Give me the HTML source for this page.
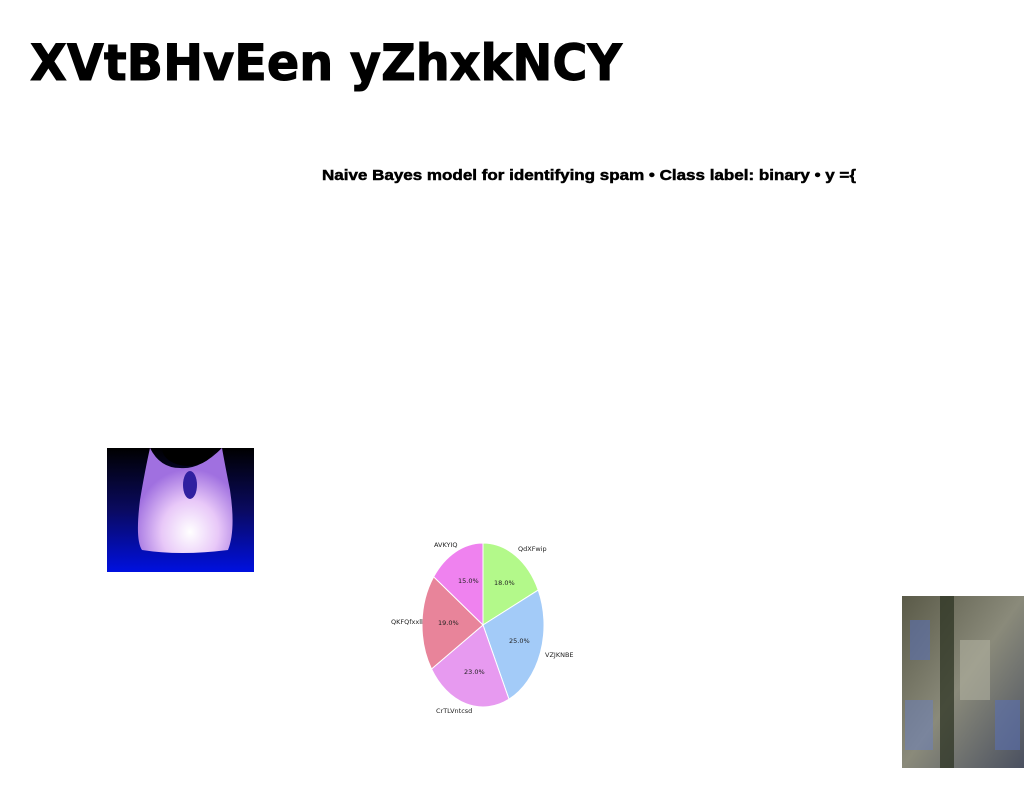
<!DOCTYPE html>
<html><head><meta charset="utf-8"><style>
html,body{margin:0;padding:0;background:#fff;width:1024px;height:788px;overflow:hidden;position:relative}
svg{position:absolute;left:0;top:0}
</style></head><body>
<svg width="1024" height="788" viewBox="0 0 1024 788">
<defs>
<radialGradient id="glow" cx="0.55" cy="0.8" r="0.6">
<stop offset="0" stop-color="#ffffff"/><stop offset="0.5" stop-color="#e8c8f8"/><stop offset="1" stop-color="#a070e0"/>
</radialGradient>
<linearGradient id="bg1" x1="0" y1="0" x2="0" y2="1">
<stop offset="0" stop-color="#000"/><stop offset="0.5" stop-color="#0a0a60"/><stop offset="1" stop-color="#0010e0"/>
</linearGradient>
<linearGradient id="sat" x1="0" y1="0" x2="1" y2="1">
<stop offset="0" stop-color="#5a5a48"/><stop offset="0.5" stop-color="#8a8a7a"/><stop offset="1" stop-color="#4a5060"/>
</linearGradient>
<clipPath id="c1"><rect x="107" y="448" width="147" height="124"/></clipPath>
</defs>
<text x="30" y="80" font-family="DejaVu Sans, sans-serif" font-weight="bold" font-size="50" stroke="#000" stroke-width="1" textLength="592" lengthAdjust="spacingAndGlyphs">XVtBHvEen yZhxkNCY</text>
<text x="322" y="180" font-family="Liberation Sans, sans-serif" font-weight="bold" font-size="15" stroke="#000" stroke-width="0.5" textLength="534" lengthAdjust="spacingAndGlyphs">Naive Bayes model for identifying spam • Class label: binary • y ={</text>

<g clip-path="url(#c1)">
<rect x="107" y="448" width="147" height="124" fill="url(#bg1)"/>
<path d="M150,448 Q145,470 140,500 Q135,540 142,550 Q180,556 228,550 Q236,530 230,490 Q225,465 222,448 Q200,470 180,468 Q160,468 150,448Z" fill="url(#glow)"/>
<ellipse cx="190" cy="485" rx="7" ry="14" fill="#3020a0"/>
<ellipse cx="188" cy="448" rx="26" ry="18" fill="#000"/>
</g>

<rect x="902" y="596" width="122" height="172" fill="url(#sat)"/>
<rect x="940" y="596" width="14" height="172" fill="#2a3020" opacity="0.7"/>
<rect x="960" y="640" width="30" height="60" fill="#b0b0a0" opacity="0.6"/>
<rect x="910" y="620" width="20" height="40" fill="#5a70b0" opacity="0.6"/>
<rect x="995" y="700" width="25" height="50" fill="#5a70b0" opacity="0.6"/>
<rect x="905" y="700" width="28" height="50" fill="#6a80c0" opacity="0.5"/>

<g transform="translate(483,625) scale(61,82)" stroke="#fff" stroke-width="1">
<path d="M0,0 L0,-1 A1,1 0 0 1 0.905,-0.426 Z" fill="#b3f98a" vector-effect="non-scaling-stroke"/>
<path d="M0,0 L0.905,-0.426 A1,1 0 0 1 0.426,0.905 Z" fill="#a3cbf8" vector-effect="non-scaling-stroke"/>
<path d="M0,0 L0.426,0.905 A1,1 0 0 1 -0.844,0.536 Z" fill="#e79af0" vector-effect="non-scaling-stroke"/>
<path d="M0,0 L-0.844,0.536 A1,1 0 0 1 -0.809,-0.588 Z" fill="#e8849a" vector-effect="non-scaling-stroke"/>
<path d="M0,0 L-0.809,-0.588 A1,1 0 0 1 0,-1 Z" fill="#ef82ef" vector-effect="non-scaling-stroke"/>
</g>
<g font-family="DejaVu Sans, sans-serif" font-size="6.5" fill="#222">
<text x="434" y="547">AVKYIQ</text>
<text x="518" y="551">QdXFwip</text>
<text x="391" y="624">QKFQfxxll</text>
<text x="545" y="657">VZJKNBE</text>
<text x="436" y="713">CrTLVntcsd</text>
<text x="458" y="583">15.0%</text>
<text x="494" y="585">18.0%</text>
<text x="438" y="625">19.0%</text>
<text x="509" y="643">25.0%</text>
<text x="464" y="674">23.0%</text>
</g>
</svg>
</body></html>
